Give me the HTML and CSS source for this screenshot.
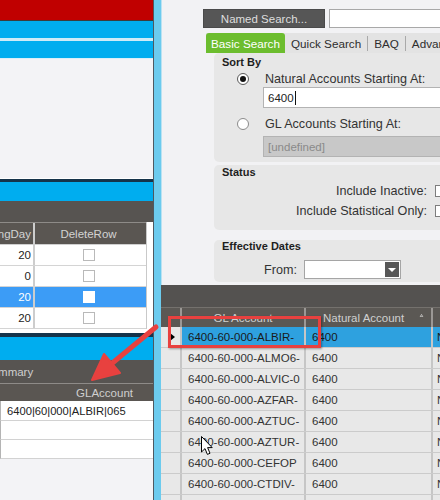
FILE: index.html
```html
<!DOCTYPE html>
<html>
<head>
<meta charset="utf-8">
<link rel="stylesheet" href="styles.css">
</head>
<body>
<div class="screen">
  <div class="left">
    <div class="bar-red"></div>
    <div class="line-dark"></div>
    <div class="bar-blue b1"></div>
    <div class="line-light"></div>
    <div class="bar-blue b2"></div>
    <div class="line-light2"></div>
    <div class="empty-area"></div>
    <div class="line-navy"></div>
    <div class="bar-blue b3"></div>
    <div class="caption"></div>
    <div class="lgrid">
      <div class="ltable">
        <div class="lrow lhead"><div class="lc1"><span>PostingDay</span></div><div class="lc2">DeleteRow</div></div>
        <div class="lrow"><div class="lc1"><span>20</span></div><div class="lc2"><span class="chk"></span></div></div>
        <div class="lrow"><div class="lc1"><span>0</span></div><div class="lc2"><span class="chk"></span></div></div>
        <div class="lrow sel"><div class="lc1"><span>20</span></div><div class="lc2"><span class="chk"></span></div></div>
        <div class="lrow"><div class="lc1"><span>20</span></div><div class="lc2"><span class="chk"></span></div></div>
      </div>
    </div>
    <div class="line-navy n2"></div>
    <div class="bar-blue b4"></div>
    <div class="caption summary"><span>Summary</span></div>
    <div class="sgrid">
      <div class="shead">GLAccount</div>
      <div class="srow">6400|60|000|ALBIR|065</div>
      <div class="srow r2"></div>
      <div class="srow r2"></div>
    </div>
  </div>
  <div class="divider"></div>
  <div class="right">
    <div class="search-row">
      <div class="named-btn">Named Search...</div>
      <div class="named-input"></div>
    </div>
    <div class="tabs">
      <div class="tab active">Basic Search</div>
      <div class="tab">Quick Search</div>
      <div class="tab-sep"></div>
      <div class="tab">BAQ</div>
      <div class="tab-sep"></div>
      <div class="tab">Advanced</div>
    </div>
    <div class="group sort">
      <div class="gtitle t-sort">Sort By</div>
      <div class="radio-row r1"><span class="radio on"></span><span class="rlabel">Natural Accounts Starting At:</span></div>
      <div class="field">6400<span class="caret"></span></div>
      <div class="radio-row r2"><span class="radio"></span><span class="rlabel">GL Accounts Starting At:</span></div>
      <div class="field disabled">[undefined]</div>
    </div>
    <div class="group status">
      <div class="gtitle t-status">Status</div>
      <div class="check-row"><span class="clabel">Include Inactive:</span><span class="cbox"></span></div>
      <div class="check-row"><span class="clabel">Include Statistical Only:</span><span class="cbox"></span></div>
    </div>
    <div class="group dates">
      <div class="gtitle t-dates">Effective Dates</div>
      <div class="from-row"><span class="flabel">From:</span><span class="combo"><span class="combo-btn"><span class="tri"></span></span></span></div>
    </div>
    <div class="rcaption"></div>
    <div class="rgrid">
      <div class="rrow rhead">
        <div class="rc0"></div>
        <div class="rc1 hc">GL Account</div>
        <div class="rc2 hc2"><span>Natural Account</span><svg class="sort" width="9" height="8" viewBox="0 0 9 8"><path d="M4.5 1 L8 7 L1 7 Z" fill="none" stroke="#fff" stroke-width="1.4"/></svg></div>
        <div class="rc3"></div>
      </div>
      <div class="rrow sel"><div class="rc0"><span class="ptr"></span></div><div class="rc1">6400-60-000-ALBIR-</div><div class="rc2">6400</div><div class="rc3">N</div></div>
      <div class="rrow"><div class="rc0"></div><div class="rc1">6400-60-000-ALMO6-</div><div class="rc2">6400</div><div class="rc3">N</div></div>
      <div class="rrow"><div class="rc0"></div><div class="rc1">6400-60-000-ALVIC-0</div><div class="rc2">6400</div><div class="rc3">N</div></div>
      <div class="rrow"><div class="rc0"></div><div class="rc1">6400-60-000-AZFAR-</div><div class="rc2">6400</div><div class="rc3">N</div></div>
      <div class="rrow"><div class="rc0"></div><div class="rc1">6400-60-000-AZTUC-</div><div class="rc2">6400</div><div class="rc3">N</div></div>
      <div class="rrow"><div class="rc0"></div><div class="rc1">6400-60-000-AZTUR-</div><div class="rc2">6400</div><div class="rc3">N</div></div>
      <div class="rrow"><div class="rc0"></div><div class="rc1">6400-60-000-CEFOP</div><div class="rc2">6400</div><div class="rc3">N</div></div>
      <div class="rrow"><div class="rc0"></div><div class="rc1">6400-60-000-CTDIV-</div><div class="rc2">6400</div><div class="rc3">N</div></div>
      <div class="rrow"><div class="rc0"></div><div class="rc1">6400-60-000-CTEMP-</div><div class="rc2">6400</div><div class="rc3">N</div></div>
    </div>
  </div>

  <div class="highlight"></div>
  <svg class="arrow" width="440" height="500" viewBox="0 0 440 500">
    <line x1="156" y1="327" x2="110" y2="365" stroke="#e8413f" stroke-width="5" stroke-linecap="round"/>
    <polygon points="92,380 104,354 120,373" fill="#e8413f" stroke="#e8413f" stroke-width="2" stroke-linejoin="round"/>
  </svg>
  <svg class="cursor" width="13" height="20" viewBox="0 0 13 20">
    <path d="M0.5 0.5 L0.5 16 L4 12.6 L6.4 18.4 L9 17.3 L6.6 11.6 L11.2 11.6 Z" fill="#fff" stroke="#000" stroke-width="1" stroke-linejoin="round"/>
  </svg>
</div>
</body>
</html>
```
FILE: styles.css
```css
* { box-sizing: border-box; }
html, body { margin: 0; padding: 0; }
body {
  width: 440px;
  height: 500px;
  overflow: hidden;
  font-family: "Liberation Sans", Arial, sans-serif;
  font-size: 12px;
  color: #2b2b2b;
  background: #f2f2f4;
}
.screen {
  position: relative;
  display: flex;
  width: 440px;
  height: 500px;
  overflow: hidden;
}

/* ---------- left panel ---------- */
.left {
  width: 153px;
  flex: none;
  display: flex;
  flex-direction: column;
  background: #f3f3f6;
}
.left > *, .right > *, .search-row > *, .tabs > *, .rrow > *, .lrow > *, .radio-row > *, .check-row > *, .from-row > * { flex-shrink: 0; }
.bar-red { height: 20px; background: #c00000; }
.line-dark { height: 1px; background: #3c3c3c; }
.bar-blue { background: #00adef; }
.b1, .b2 { height: 17px; }
.b3 { height: 19px; }
.b4 { height: 23px; }
.line-light { height: 3px; background: #cdebf7; }
.line-light2 { height: 1px; background: #d9eff9; }
.empty-area { height: 120px; border-bottom: 1px solid #ffffff; }
.line-navy { height: 3px; background: #15334a; }
.n2 { height: 4px; }
.caption { height: 21px; background: #575451; }
.caption.summary {
  height: 23px;
  color: #cfcfcf;
  font-size: 11.5px;
  display: flex;
  align-items: center;
  overflow: hidden;
  white-space: nowrap;
}
.caption.summary span { margin-left: -16px; }

.lgrid { height: 111px; background: #ffffff; }
.ltable { width: 147px; border-right: 1px solid #c9c9c9; }
.lrow {
  display: flex;
  height: 21px;
  border-bottom: 1px solid #d4d4d4;
  font-size: 11.5px;
}
.lrow.lhead {
  height: 23px;
  background: #5a5652;
  color: #d3d3d3;
  border-top: 1px solid #8e8b88;
  border-bottom: 1px solid #cfcfcf;
}
.lc1 {
  width: 35px;
  border-right: 2px solid #cdcdcd;
  display: flex;
  justify-content: flex-end;
  align-items: center;
  padding-right: 2px;
  overflow: hidden;
  white-space: nowrap;
  color: #222;
}
.lhead .lc1 { color: #d3d3d3; }
.lc2 {
  flex: 1;
  display: flex;
  justify-content: center;
  align-items: center;
  padding-right: 4px;
}
.lrow.sel { background: #3c9cf6; }
.lrow.sel .lc1 { color: #ffffff; }
.chk {
  width: 12px;
  height: 12px;
  border: 1px solid #b9b9b9;
  background: #ffffff;
}
.sel .chk { border-color: #ffffff; }

.sgrid { display: flex; flex-direction: column; }
.sgrid > * { flex-shrink: 0; }
.shead {
  height: 18px;
  background: #5a5652;
  color: #cfcfcf;
  font-size: 11.5px;
  border-top: 1px solid #8e8b88;
  display: flex;
  align-items: center;
  justify-content: flex-end;
  padding-right: 20px;
}
.srow {
  height: 20px;
  background: #ffffff;
  border-left: 1px solid #b4b4b4;
  border-bottom: 1px solid #d2d2d2;
  font-size: 11.2px;
  color: #222;
  display: flex;
  align-items: center;
  padding-left: 6px;
}
.srow.r2 { height: 19px; }

/* ---------- divider ---------- */
.divider {
  width: 9px;
  flex: none;
  border-left: 1px solid #4e5961;
  border-right: 1px solid #b9e2f2;
  background: #6ccbee;
}

/* ---------- right panel ---------- */
.right {
  flex: none;
  width: 300px;
  display: flex;
  flex-direction: column;
  background: #f2f2f4;
  padding-top: 9px;
}
.search-row { display: flex; margin-left: 41px; height: 19px; }
.named-btn {
  width: 122px;
  background: #565656;
  border: 1px solid #4a4a4a;
  color: #dedede;
  font-size: 11.5px;
  display: flex;
  align-items: center;
  justify-content: center;
}
.named-input {
  margin-left: 4px;
  width: 200px;
  background: #ffffff;
  border: 1px solid #a8a8a8;
}
.tabs {
  display: flex;
  align-items: center;
  margin: 5px 0 0 44px;
  height: 20px;
  background: #e3e3e3;
}
.tab {
  height: 20px;
  padding: 0 6px;
  display: flex;
  align-items: center;
  font-size: 11.7px;
  color: #2e2e2e;
  white-space: nowrap;
}
.tab.active {
  width: 79px;
  padding: 0;
  justify-content: center;
  background: #6cbd2e;
  color: #ffffff;
  border-radius: 3px 3px 0 0;
}
.tab-sep { width: 1px; height: 15px; background: #a9a9a9; }

.group {
  margin-left: 52px;
  background: #e7e7e7;
  border-radius: 5px 0 0 5px;
  padding-left: 8px;
  display: flex;
  flex-direction: column;
}
.group > * { flex-shrink: 0; }
.gtitle {
  font-weight: bold;
  font-size: 11px;
  color: #1e1e1e;
  display: flex;
  align-items: center;
}
.t-sort { height: 18px; }
.t-status { height: 13px; }
.t-dates { height: 11px; }
.sort { padding-bottom: 5px; }
.radio-row { display: flex; align-items: center; }
.radio-row.r1 { height: 15px; }
.radio-row.r2 { height: 16px; margin-top: 8px; }
.radio {
  width: 12px;
  height: 12px;
  margin-left: 15px;
  border-radius: 50%;
  border: 1px solid #8b8b8b;
  background: #ffffff;
  display: flex;
  align-items: center;
  justify-content: center;
}
.radio.on { border-color: #5a5a5a; }
.radio.on::after {
  content: "";
  width: 6px;
  height: 6px;
  border-radius: 50%;
  background: #111111;
}
.rlabel { margin-left: 16px; font-size: 12.6px; color: #333333; white-space: nowrap; }
.field {
  margin-left: 41px;
  margin-top: 1px;
  height: 21px;
  width: 220px;
  background: #ffffff;
  border: 1px solid #b3b3b3;
  padding-left: 4px;
  font-size: 11.5px;
  color: #222;
  display: flex;
  align-items: center;
}
.field.disabled {
  margin-top: 4px;
  background: #c8c8c8;
  border-color: #b3b3b3;
  color: #8a8a8a;
}
.caret { width: 1px; height: 14px; background: #111; margin-left: 1px; }

.status { margin-top: 3px; padding-bottom: 12px; }
.check-row { display: flex; align-items: center; height: 14px; margin-top: 6px; }
.clabel {
  width: 205px;
  text-align: right;
  font-size: 12.6px;
  color: #333333;
  white-space: nowrap;
}
.cbox {
  width: 12px;
  height: 12px;
  margin-left: 8px;
  border: 1px solid #7d7d7d;
  background: #ffffff;
}

.dates { margin-top: 10px; padding-bottom: 3px; }
.from-row { display: flex; align-items: center; margin-top: 9px; height: 19px; }
.flabel {
  width: 75px;
  text-align: right;
  font-size: 12.6px;
  color: #333333;
}
.combo {
  margin-left: 7px;
  width: 97px;
  height: 19px;
  background: #ffffff;
  border: 1px solid #a5a5a5;
  display: flex;
  justify-content: flex-end;
  align-items: center;
  padding-right: 1px;
}
.combo-btn {
  width: 14px;
  height: 15px;
  background: #575757;
  display: flex;
  align-items: center;
  justify-content: center;
}
.tri {
  width: 0;
  height: 0;
  border-left: 4px solid transparent;
  border-right: 4px solid transparent;
  border-top: 4px solid #ffffff;
}

.rcaption { height: 22px; margin-top: 3px; background: #545250; margin-left: -1px; }
.rgrid { background: #e8e8e8; margin-left: -1px; }
.rrow {
  display: flex;
  height: 21px;
  border-bottom: 1px solid #cbcbcb;
  font-size: 11.5px;
  color: #333333;
  white-space: nowrap;
}
.rrow.rhead {
  height: 20px;
  background: #5b5854;
  border-top: 1px solid #74716d;
  border-bottom: none;
  color: #d0d0d0;
}
.rc0 {
  width: 21px;
  border-right: 2px solid #c6c6c6;
  display: flex;
  align-items: center;
  background: #e8e8e8;
}
.rhead .rc0 { background: #5b5854; border-right-color: #9b9895; }
.rc1, .rc2, .rc3 { display: flex; align-items: center; padding-left: 6px; overflow: hidden; }
.rc1 { width: 124px; border-right: 2px solid #c6c6c6; }
.rc2 { width: 127px; border-right: 2px solid #c6c6c6; }
.rc3 { flex: 1 0 0; padding-left: 4px; }
.rhead .rc1, .rhead .rc2 { border-right-color: #9b9895; }
.hc { justify-content: center; padding-left: 0; }
.hc2 { padding-left: 17px; }
.hc2 .sort { margin-left: auto; margin-right: 5px; }
.rrow.sel .rc1, .rrow.sel .rc2, .rrow.sel .rc3 { background: #2ea1df; color: #1a1a1a; }
.ptr {
  width: 0;
  height: 0;
  margin-left: 9px;
  border-top: 4px solid transparent;
  border-bottom: 4px solid transparent;
  border-left: 5px solid #000000;
}

/* ---------- annotations ---------- */
.highlight {
  position: absolute;
  left: 168px;
  top: 316px;
  width: 153px;
  height: 32px;
  border: 3px solid #e8413f;
  box-shadow: 1px 1px 2px rgba(0, 0, 0, 0.35);
}
.arrow { position: absolute; left: 0; top: 0; pointer-events: none; }
.cursor { position: absolute; left: 201px; top: 436px; }
```
